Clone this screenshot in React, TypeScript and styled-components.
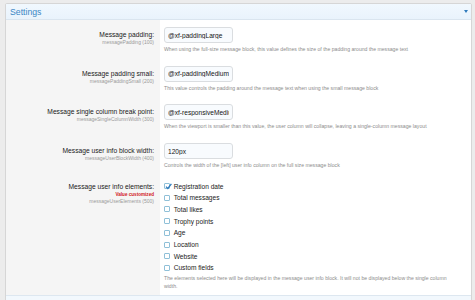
import React from 'react'
import styled, { createGlobalStyle } from 'styled-components'

const GlobalStyle = createGlobalStyle`
  html, body {
    margin: 0;
    padding: 0;
    background: #ececec;
    overflow: hidden;
  }
  body {
    font-family: "Liberation Sans", Arial, sans-serif;
    color: #141414;
  }
`

const Block = styled.div`
  margin: 3px 3px 0 5px;
  border: 1px solid #d6d6d6;
  border-radius: 2px;
  background: #fff;
  overflow: hidden;
`

const BlockHeader = styled.div`
  display: flex;
  align-items: center;
  justify-content: space-between;
  height: 15px;
  padding: 0 3px 0 4px;
  background: linear-gradient(to bottom, #f1f8fe, #e9f3fc);
  border-bottom: 1px solid #dae5ef;
  color: #3a86c4;
  font-size: 8.7px;
`

const Caret = styled.span`
  width: 0;
  height: 0;
  border-left: 2.5px solid transparent;
  border-right: 2.5px solid transparent;
  border-top: 3px solid #2f7bbd;
`

const FormRow = styled.div`
  display: grid;
  grid-template-columns: 154px 1fr;
`

const Term = styled.div<{ $top: number }>`
  background: #f5f5f5;
  text-align: right;
  padding: ${p => p.$top}px 6px 0 0;
`

const Label = styled.div`
  font-size: 6.7px;
  line-height: 9px;
  color: #1a1a1a;
`

const Hint = styled.div`
  font-size: 4.6px;
  line-height: 7px;
  font-weight: bold;
  color: #d0161c;
`

const Sub = styled.div`
  font-size: 5px;
  line-height: 7px;
  color: #9a9a9a;
`

const Desc = styled.dd<{ $top: number }>`
  margin: 0;
  padding: ${p => p.$top}px 13px 5.7px 4px;
`

const TextInput = styled.input`
  display: block;
  box-sizing: border-box;
  width: 69px;
  height: 16px;
  margin: 0;
  padding: 0 3px;
  border: 1px solid #dadde0;
  border-radius: 3px;
  background: #f8fbfe;
  font-family: inherit;
  font-size: 6.6px;
  color: #141414;
  outline: none;
`

const Explain = styled.div<{ $top?: number }>`
  margin-top: ${p => p.$top ?? 2}px;
  font-size: 5.15px;
  line-height: 8px;
  color: #8c8c8c;
`

const ChoiceList = styled.ul`
  list-style: none;
  margin: -1.5px 0 0;
  padding: 0;
`

const Choice = styled.li`
  display: flex;
  align-items: center;
  gap: 3.7px;
  height: 11.7px;
  font-size: 6.6px;
  color: #1a1a1a;
`

const Box = styled.span`
  position: relative;
  display: inline-block;
  box-sizing: border-box;
  width: 6px;
  height: 6px;
  border: 1px solid #8fc0d8;
  border-radius: 1px;
  background: #fff;

  svg {
    position: absolute;
    left: -0.5px;
    top: -1.5px;
  }
`

const Footer = styled.div`
  height: 10px;
  border-top: 1px solid #dde7f0;
  background: #f2f8fd;
`

const CheckMark = () => (
  <svg width="7" height="7" viewBox="0 0 7 7">
    <path d="M1 3.6 L2.8 5.4 L6.4 0.8" fill="none" stroke="#2f7bbd" strokeWidth="1.3" />
  </svg>
)

const textRows = [
  {
    label: 'Message padding:',
    sub: 'messagePadding (100)',
    value: '@xf-paddingLarge',
    explain:
      'When using the full-size message block, this value defines the size of the padding around the message text',
  },
  {
    label: 'Message padding small:',
    sub: 'messagePaddingSmall (200)',
    value: '@xf-paddingMedium',
    explain:
      'This value controls the padding around the message text when using the small message block',
  },
  {
    label: 'Message single column break point:',
    sub: 'messageSingleColumnWidth (300)',
    value: '@xf-responsiveMedium',
    explain:
      'When the viewport is smaller than this value, the user column will collapse, leaving a single-column message layout',
  },
  {
    label: 'Message user info block width:',
    sub: 'messageUserBlockWidth (400)',
    value: '120px',
    explain:
      'Controls the width of the [left] user info column on the full size message block',
  },
]

const elements = [
  { name: 'Registration date', checked: true },
  { name: 'Total messages' },
  { name: 'Total likes' },
  { name: 'Trophy points' },
  { name: 'Age' },
  { name: 'Location' },
  { name: 'Website' },
  { name: 'Custom fields' },
]

export default function App() {
  return (
    <>
      <GlobalStyle />
      <Block>
        <BlockHeader>
          <span>Settings</span>
          <Caret />
        </BlockHeader>
        {textRows.map(row => (
          <FormRow key={row.sub}>
            <Term $top={10}>
              <Label>{row.label}</Label>
              <Sub>{row.sub}</Sub>
            </Term>
            <Desc $top={7}>
              <TextInput defaultValue={row.value} />
              <Explain>{row.explain}</Explain>
            </Desc>
          </FormRow>
        ))}
        <FormRow>
          <Term $top={7}>
            <Label>Message user info elements:</Label>
            <Hint>Value customized</Hint>
            <Sub>messageUserElements (500)</Sub>
          </Term>
          <Desc $top={7}>
            <ChoiceList>
              {elements.map(el => (
                <Choice key={el.name}>
                  <Box>{el.checked && <CheckMark />}</Box>
                  {el.name}
                </Choice>
              ))}
            </ChoiceList>
            <Explain $top={0}>
              The elements selected here will be displayed in the message user info block. It will
              not be displayed below the single column width.
            </Explain>
          </Desc>
        </FormRow>
        <Footer />
      </Block>
    </>
  )
}
